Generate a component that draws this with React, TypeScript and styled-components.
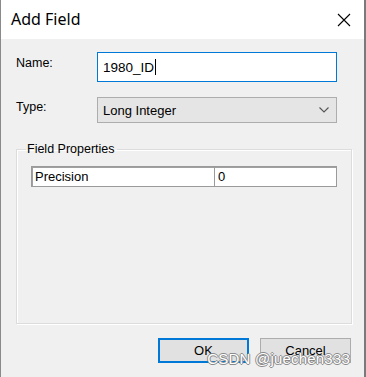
import React from "react";
import styled, { createGlobalStyle } from "styled-components";

const GlobalStyle = createGlobalStyle`
  html, body {
    margin: 0;
    padding: 0;
    background: #f0f0f0;
  }
`;

const Window = styled.div`
  position: relative;
  width: 366px;
  height: 377px;
  box-sizing: border-box;
  display: flex;
  flex-direction: column;
  border-left: 1px solid #8a8a8a;
  border-right: 2px solid #7a7a7a;
  background: #f0f0f0;
  font-family: "Liberation Sans", Arial, sans-serif;
  font-size: 12.5px;
  color: #000;
  overflow: hidden;
`;

const TitleBar = styled.div`
  height: 39px;
  flex: none;
  display: flex;
  align-items: center;
  justify-content: space-between;
  background: #fff;
  padding: 0 13px 0 10px;
`;

const Title = styled.span`
  font-family: "Noto Sans", "Segoe UI", sans-serif;
  font-size: 16px;
  padding-bottom: 2px;
`;

const Body = styled.div`
  flex: 1;
  display: flex;
  flex-direction: column;
  padding: 13px 12px 0 14px;
`;

const FieldRow = styled.div<{ $gap: number }>`
  display: grid;
  grid-template-columns: 82px 240px;
  align-items: start;
  margin-bottom: ${(p) => p.$gap}px;
`;

const Label = styled.label<{ $top: number }>`
  padding-left: 1px;
  padding-top: ${(p) => p.$top}px;
`;

const TextBox = styled.div`
  height: 30px;
  box-sizing: border-box;
  border: 1px solid #0078d7;
  background: #fff;
  display: flex;
  align-items: center;
  padding-left: 5px;
  font-size: 13.5px;
`;

const Caret = styled.span`
  display: inline-block;
  width: 1px;
  height: 16px;
  background: #000;
  margin-left: 1px;
`;

const Combo = styled.div`
  height: 26px;
  box-sizing: border-box;
  border: 1px solid #adadad;
  background: #e5e5e5;
  display: flex;
  align-items: center;
  justify-content: space-between;
  padding: 0 7px 0 5px;
  font-size: 13px;
`;

const Group = styled.fieldset`
  margin: 3px 0 0 1px;
  padding: 10px 14px 0 14px;
  height: 182px;
  box-sizing: border-box;
  border: 1px solid #dcdcdc;
  box-shadow: inset 1px 1px 0 #fff, 1px 1px 0 #fff;
  border-radius: 0;
`;

const Legend = styled.legend`
  padding: 0 2px 0 1px;
  margin-left: -5px;
  font-size: 12.5px;
`;

const PropTable = styled.div`
  display: grid;
  grid-template-columns: 183px 1fr;
  height: 21px;
  box-sizing: border-box;
  border: 1px solid #9a9a9a;
  box-shadow: inset 1px 1px 0 #a0a0a0;
  background: #fff;
`;

const Cell = styled.div<{ $divider?: boolean }>`
  display: flex;
  align-items: center;
  padding-left: 3px;
  font-size: 13px;
  border-right: ${(p) => (p.$divider ? "1px solid #9a9a9a" : "none")};
`;

const ButtonBar = styled.div`
  display: flex;
  justify-content: flex-end;
  gap: 11px;
  padding: 14px 1px 0 0;
`;

const Button = styled.button<{ $default?: boolean }>`
  width: 91px;
  height: 25px;
  box-sizing: border-box;
  font-family: "Liberation Sans", Arial, sans-serif;
  font-size: 13px;
  color: #000;
  background: #e1e1e1;
  border: ${(p) => (p.$default ? "2px solid #0078d7" : "1px solid #adadad")};
  padding: 0;
`;

const Watermark = styled.div`
  position: absolute;
  right: 14px;
  bottom: 10px;
  font-family: "Liberation Sans", Arial, sans-serif;
  font-size: 15px;
  color: #fff;
  letter-spacing: 0.2px;
  text-shadow: -1px 0 #8a8a8a, 1px 0 #8a8a8a, 0 -1px #8a8a8a, 0 1px #8a8a8a;
  pointer-events: none;
`;

const App = () => {
  return (
    <>
      <GlobalStyle />
      <Window>
        <TitleBar>
          <Title>Add Field</Title>
          <svg width="14" height="14" viewBox="0 0 14 14">
            <path d="M1 1 L13 13 M13 1 L1 13" stroke="#000" strokeWidth="1.1" />
          </svg>
        </TitleBar>
        <Body>
          <FieldRow $gap={15}>
            <Label $top={4}>Name:</Label>
            <TextBox>
              1980_ID
              <Caret />
            </TextBox>
          </FieldRow>
          <FieldRow $gap={16}>
            <Label $top={3}>Type:</Label>
            <Combo>
              <span>Long Integer</span>
              <svg width="10" height="6" viewBox="0 0 10 6">
                <path d="M0.5 0.5 L5 5 L9.5 0.5" fill="none" stroke="#555" strokeWidth="1.1" />
              </svg>
            </Combo>
          </FieldRow>
          <Group>
            <Legend>Field Properties</Legend>
            <PropTable>
              <Cell $divider>Precision</Cell>
              <Cell>0</Cell>
            </PropTable>
          </Group>
          <ButtonBar>
            <Button $default>OK</Button>
            <Button>Cancel</Button>
          </ButtonBar>
        </Body>
        <Watermark>CSDN @juechen333</Watermark>
      </Window>
    </>
  );
};

export default App;
